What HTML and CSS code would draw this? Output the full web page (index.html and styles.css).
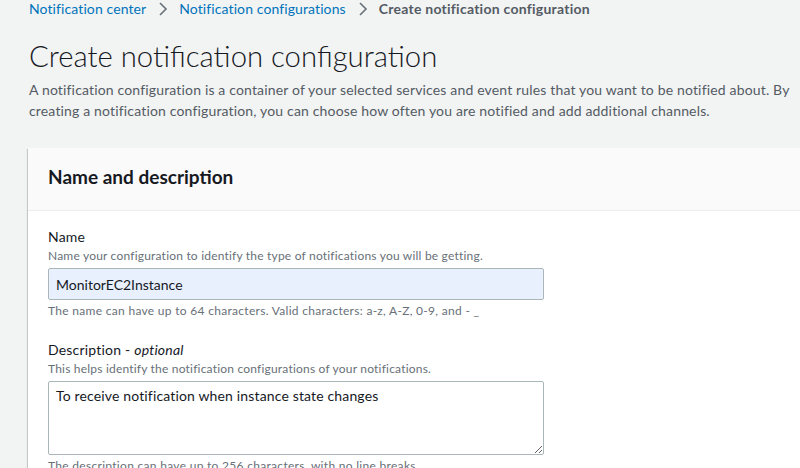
FILE: index.html
```html
<!DOCTYPE html>
<html lang="en">
<head>
<meta charset="utf-8">
<title>Create notification configuration</title>
<link rel="stylesheet" href="styles.css">
</head>
<body>
<div class="page">
  <nav class="breadcrumbs">
    <a href="#" class="crumb-link">Notification center</a>
    <svg class="chevron" width="10" height="16" viewBox="0 0 10 16"><polyline points="2,2 8,8 2,14" fill="none" stroke="#687078" stroke-width="1.6"/></svg>
    <a href="#" class="crumb-link">Notification configurations</a>
    <svg class="chevron" width="10" height="16" viewBox="0 0 10 16"><polyline points="2,2 8,8 2,14" fill="none" stroke="#687078" stroke-width="1.6"/></svg>
    <span class="crumb-current">Create notification configuration</span>
  </nav>
  <h1 class="title">Create notification configuration</h1>
  <p class="lead">A notification configuration is a container of your selected services and event rules that you want to be notified about. By creating a notification configuration, you can choose how often you are notified and add additional channels.</p>

  <section class="card">
    <header class="card-header">
      <h2 class="card-title">Name and description</h2>
    </header>
    <div class="card-body">
      <div class="field">
        <label class="field-label" for="name">Name</label>
        <div class="field-hint">Name your configuration to identify the type of notifications you will be getting.</div>
        <input id="name" class="text-input" type="text" value="MonitorEC2Instance">
        <div class="field-constraint">The name can have up to 64 characters. Valid characters: a-z, A-Z, 0-9, and - _</div>
      </div>
      <div class="field field-spaced">
        <label class="field-label" for="desc">Description - <i>optional</i></label>
        <div class="field-hint">This helps identify the notification configurations of your notifications.</div>
        <textarea id="desc" class="text-area">To receive notification when instance state changes</textarea>
        <div class="field-constraint">The description can have up to 256 characters, with no line breaks.</div>
      </div>
    </div>
  </section>
</div>
</body>
</html>
```

FILE: styles.css
```css
html, body {
  margin: 0;
  padding: 0;
  background: #f2f3f3;
  overflow: hidden;
}
body {
  font-family: Lato, "Open Sans", sans-serif;
  color: #16191f;
  width: 800px;
  height: 468px;
}
.page {
  width: 800px;
  padding-left: 29px;
}
.breadcrumbs {
  display: flex;
  align-items: center;
  height: 18px;
  font-size: 14px;
  line-height: 18px;
  white-space: nowrap;
}
.crumb-link {
  color: #0073bb;
  text-decoration: none;
  letter-spacing: 0.1px;
}
.chevron {
  margin: 0 11px 0 12px;
}
.crumb-current {
  color: #545b64;
  font-weight: 700;
  letter-spacing: 0.25px;
}
.title {
  margin: 20px 0 0;
  font-size: 29.3px;
  line-height: 36px;
  font-weight: 300;
  color: #16191f;
}
.lead {
  margin: 5px 0 0;
  font-size: 14px;
  line-height: 21px;
  letter-spacing: 0.16px;
  color: #545b64;
}
.card {
  margin: 27px 0 0 -1px;
  background: #fff;
  box-shadow: 0 1px 1px 0 rgba(0,28,36,.3), 1px 1px 1px 0 rgba(0,28,36,.15), -1px 1px 1px 0 rgba(0,28,36,.15);
  height: 400px;
}
.card-header {
  background: #fafafa;
  border-bottom: 1px solid #eaeded;
  padding: 17px 20px 21px;
}
.card-title {
  margin: 0;
  font-size: 19px;
  line-height: 24px;
  font-weight: 700;
}
.card-body {
  padding: 16px 20px 0;
}
.field {
  display: flex;
  flex-direction: column;
  align-items: flex-start;
}
.field-spaced {
  margin-top: 21px;
}
.field-label {
  font-size: 14px;
  line-height: 20px;
  letter-spacing: 0.2px;
  color: #16191f;
}
.field-hint {
  font-size: 12px;
  line-height: 16px;
  letter-spacing: 0.2px;
  color: #687078;
  margin-top: 1px;
}
.field-constraint {
  font-size: 12px;
  line-height: 16px;
  letter-spacing: 0.3px;
  color: #687078;
  margin-top: 3px;
}
.text-input, .text-area {
  box-sizing: border-box;
  width: 496px;
  margin-top: 4px;
  border: 1px solid #aab7b8;
  border-radius: 2px;
  font-family: inherit;
  font-size: 14px;
  color: #16191f;
  padding: 4px 8px 4px 7px;
}
.text-input {
  height: 32px;
  background: #e8f0fe;
}
.text-area {
  height: 74px;
  background: #fff;
  line-height: 20px;
  letter-spacing: 0.15px;
  resize: vertical;
}
```
